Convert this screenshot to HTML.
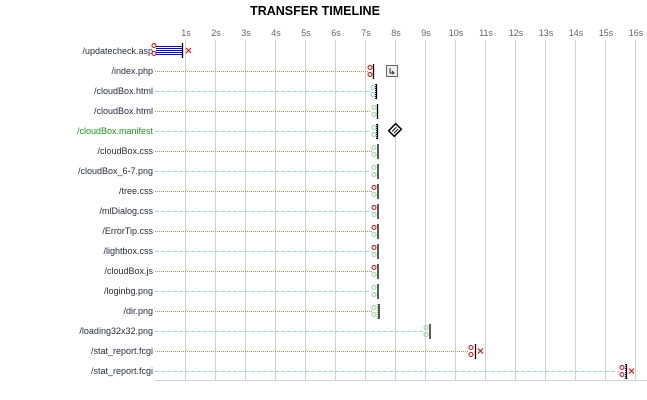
<!DOCTYPE html>
<html><head><meta charset="utf-8"><style>
body{margin:0;background:#fff;width:647px;height:400px;overflow:hidden}
svg{display:block}
text{font-family:"Liberation Sans",sans-serif;font-size:9px}
</style></head><body>
<svg width="647" height="400" xmlns="http://www.w3.org/2000/svg">
<text x="315" y="15" text-anchor="middle" style="font-size:12.5px;font-weight:bold" fill="#000">TRANSFER TIMELINE</text>
<g fill="#666" text-anchor="middle">
<text x="186" y="36">1s</text><text x="216" y="36">2s</text><text x="246" y="36">3s</text><text x="276" y="36">4s</text><text x="306" y="36">5s</text><text x="336" y="36">6s</text><text x="366" y="36">7s</text><text x="396" y="36">8s</text><text x="426" y="36">9s</text><text x="456" y="36">10s</text><text x="486" y="36">11s</text><text x="516" y="36">12s</text><text x="546" y="36">13s</text><text x="576" y="36">14s</text><text x="606" y="36">15s</text><text x="636" y="36">16s</text>
</g>
<g stroke="#d0d0d0" stroke-width="1" shape-rendering="crispEdges">
<line x1="185.5" y1="40" x2="185.5" y2="380"/><line x1="215.5" y1="40" x2="215.5" y2="380"/><line x1="245.5" y1="40" x2="245.5" y2="380"/><line x1="275.5" y1="40" x2="275.5" y2="380"/><line x1="305.5" y1="40" x2="305.5" y2="380"/><line x1="335.5" y1="40" x2="335.5" y2="380"/><line x1="365.5" y1="40" x2="365.5" y2="380"/><line x1="395.5" y1="40" x2="395.5" y2="380"/><line x1="425.5" y1="40" x2="425.5" y2="380"/><line x1="455.5" y1="40" x2="455.5" y2="380"/><line x1="485.5" y1="40" x2="485.5" y2="380"/><line x1="515.5" y1="40" x2="515.5" y2="380"/><line x1="545.5" y1="40" x2="545.5" y2="380"/><line x1="575.5" y1="40" x2="575.5" y2="380"/><line x1="605.5" y1="40" x2="605.5" y2="380"/><line x1="635.5" y1="40" x2="635.5" y2="380"/>
<line x1="155" y1="380.5" x2="647" y2="380.5"/>
</g>
<g stroke-width="1" shape-rendering="crispEdges">
<line x1="155" y1="71.5" x2="368" y2="71.5" stroke="#a89c50" stroke-dasharray="1,1"/>
<line x1="155" y1="91.5" x2="371" y2="91.5" stroke="#9ad8e2" stroke-dasharray="4,2"/>
<line x1="155" y1="111.5" x2="371" y2="111.5" stroke="#a89c50" stroke-dasharray="1,1"/>
<line x1="155" y1="131.5" x2="371" y2="131.5" stroke="#9ad8e2" stroke-dasharray="4,2"/>
<line x1="155" y1="151.5" x2="372" y2="151.5" stroke="#a89c50" stroke-dasharray="1,1"/>
<line x1="155" y1="171.5" x2="372" y2="171.5" stroke="#9ad8e2" stroke-dasharray="4,2"/>
<line x1="155" y1="191.5" x2="372" y2="191.5" stroke="#a89c50" stroke-dasharray="1,1"/>
<line x1="155" y1="211.5" x2="372" y2="211.5" stroke="#9ad8e2" stroke-dasharray="4,2"/>
<line x1="155" y1="231.5" x2="372" y2="231.5" stroke="#a89c50" stroke-dasharray="1,1"/>
<line x1="155" y1="251.5" x2="372" y2="251.5" stroke="#9ad8e2" stroke-dasharray="4,2"/>
<line x1="155" y1="271.5" x2="372" y2="271.5" stroke="#a89c50" stroke-dasharray="1,1"/>
<line x1="155" y1="291.5" x2="372" y2="291.5" stroke="#9ad8e2" stroke-dasharray="4,2"/>
<line x1="155" y1="311.5" x2="372" y2="311.5" stroke="#a89c50" stroke-dasharray="1,1"/>
<line x1="155" y1="331.5" x2="424" y2="331.5" stroke="#9ad8e2" stroke-dasharray="4,2"/>
<line x1="155" y1="351.5" x2="469" y2="351.5" stroke="#a89c50" stroke-dasharray="1,1"/>
<line x1="155" y1="371.5" x2="620" y2="371.5" stroke="#9ad8e2" stroke-dasharray="4,2"/>
</g>
<g text-anchor="end" fill="#2a2a40">
<text x="153" y="54">/updatecheck.asp</text>
<text x="153" y="74">/index.php</text>
<text x="153" y="94">/cloudBox.html</text>
<text x="153" y="114">/cloudBox.html</text>
<text x="153" y="134" fill="#1a9a1a">/cloudBox.manifest</text>
<text x="153" y="154">/cloudBox.css</text>
<text x="153" y="174">/cloudBox_6-7.png</text>
<text x="153" y="194">/tree.css</text>
<text x="153" y="214">/mlDialog.css</text>
<text x="153" y="234">/ErrorTip.css</text>
<text x="153" y="254">/lightbox.css</text>
<text x="153" y="274">/cloudBox.js</text>
<text x="153" y="294">/loginbg.png</text>
<text x="153" y="314">/dir.png</text>
<text x="153" y="334">/loading32x32.png</text>
<text x="153" y="354">/stat_report.fcgi</text>
<text x="153" y="374">/stat_report.fcgi</text>
</g>
<g stroke="#0000ee" stroke-width="1" shape-rendering="crispEdges">
<line x1="156" y1="46.5" x2="182" y2="46.5"/><line x1="156" y1="48.5" x2="182" y2="48.5"/><line x1="156" y1="50.5" x2="182" y2="50.5"/><line x1="156" y1="52.5" x2="182" y2="52.5"/><line x1="156" y1="54.5" x2="182" y2="54.5"/>
</g>
<g fill="none" stroke-width="1">
<circle cx="154" cy="45.5" r="2" stroke="#e00"/><circle cx="154" cy="53.5" r="2" stroke="#e00"/>
</g>
<line x1="182.5" y1="43" x2="182.5" y2="58" stroke="#000" stroke-width="1.3"/>
<path d="M186 48 l5 5 M191 48 l-5 5" stroke="#e00" stroke-width="1"/>
<g fill="none" stroke-width="1">
<circle cx="370" cy="67.5" r="2" stroke="#e00"/><circle cx="370" cy="74.5" r="2" stroke="#e00"/>
<circle cx="373" cy="87.5" r="2" stroke="#8d8"/><circle cx="373" cy="94.5" r="2" stroke="#8d8"/>
<circle cx="374" cy="107.5" r="2" stroke="#8d8"/><circle cx="374" cy="114.5" r="2" stroke="#8d8"/>
<circle cx="374" cy="127.5" r="2" stroke="#8d8"/><circle cx="374" cy="134.5" r="2" stroke="#8d8"/>
<circle cx="374" cy="147.5" r="2" stroke="#8d8"/><circle cx="374" cy="154.5" r="2" stroke="#8d8"/>
<circle cx="374" cy="167.5" r="2" stroke="#8d8"/><circle cx="374" cy="174.5" r="2" stroke="#8d8"/>
<circle cx="374" cy="187.5" r="2" stroke="#e00"/><circle cx="374" cy="194.5" r="2" stroke="#8d8"/>
<circle cx="374" cy="207.5" r="2" stroke="#e00"/><circle cx="374" cy="214.5" r="2" stroke="#8d8"/>
<circle cx="374" cy="227.5" r="2" stroke="#e00"/><circle cx="374" cy="234.5" r="2" stroke="#8d8"/>
<circle cx="374" cy="247.5" r="2" stroke="#e00"/><circle cx="374" cy="254.5" r="2" stroke="#8d8"/>
<circle cx="374" cy="267.5" r="2" stroke="#e00"/><circle cx="374" cy="274.5" r="2" stroke="#8d8"/>
<circle cx="374" cy="287.5" r="2" stroke="#8d8"/><circle cx="374" cy="294.5" r="2" stroke="#8d8"/>
<circle cx="374" cy="307.5" r="2" stroke="#8d8"/><circle cx="374" cy="314.5" r="2" stroke="#8d8"/>
<circle cx="426" cy="327.5" r="2" stroke="#8d8"/><circle cx="426" cy="334.5" r="2" stroke="#8d8"/>
<circle cx="471" cy="347.5" r="2" stroke="#e00"/><circle cx="471" cy="354.5" r="2" stroke="#e00"/>
<circle cx="622" cy="367.5" r="2" stroke="#e00"/><circle cx="622" cy="374.5" r="2" stroke="#e00"/>
</g>
<g stroke="#000" stroke-width="1.3">
<line x1="373.5" y1="64" x2="373.5" y2="79"/>
<line x1="376.5" y1="84" x2="376.5" y2="99"/>
<line x1="377.5" y1="104" x2="377.5" y2="119"/>
<line x1="377.5" y1="124" x2="377.5" y2="139"/>
<line x1="378" y1="144" x2="378" y2="159"/>
<line x1="378" y1="164" x2="378" y2="179"/>
<line x1="378" y1="184" x2="378" y2="199"/>
<line x1="378" y1="204" x2="378" y2="219"/>
<line x1="378" y1="224" x2="378" y2="239"/>
<line x1="378" y1="244" x2="378" y2="259"/>
<line x1="378" y1="264" x2="378" y2="279"/>
<line x1="378" y1="284" x2="378" y2="299"/>
<line x1="379" y1="304" x2="379" y2="319"/>
<line x1="430" y1="324" x2="430" y2="339"/>
<line x1="475.5" y1="344" x2="475.5" y2="359"/>
<line x1="626.5" y1="364" x2="626.5" y2="379"/>
</g>
<line x1="375.5" y1="84" x2="375.5" y2="99" stroke="#00e" stroke-dasharray="1,1"/>
<line x1="376.5" y1="124" x2="376.5" y2="139" stroke="#00e" stroke-dasharray="1,1"/>
<line x1="378" y1="304" x2="378" y2="319" stroke="#2a2" stroke-dasharray="1,1"/>
<line x1="625.5" y1="364" x2="625.5" y2="379" stroke="#00e" stroke-dasharray="1,1"/>
<path d="M478 348.5 l5 5 M483 348.5 l-5 5" stroke="#e00" stroke-width="1"/>
<path d="M629 368.5 l5 5 M634 368.5 l-5 5" stroke="#e00" stroke-width="1"/>
<rect x="386.5" y="65.5" width="11" height="11" fill="#eee" stroke="#666"/>
<path d="M390 68 v5 h4 M392 71 l2 2 l-2 1" stroke="#333" fill="none"/>
<g transform="translate(395,130) rotate(-45)">
<rect x="-5" y="-4" width="10" height="8" fill="#fff" stroke="#000" stroke-width="1.5"/>
<line x1="-3" y1="-1" x2="3" y2="-1" stroke="#000"/><line x1="-3" y1="1.5" x2="3" y2="1.5" stroke="#000"/>
</g>
</svg>
</body></html>
